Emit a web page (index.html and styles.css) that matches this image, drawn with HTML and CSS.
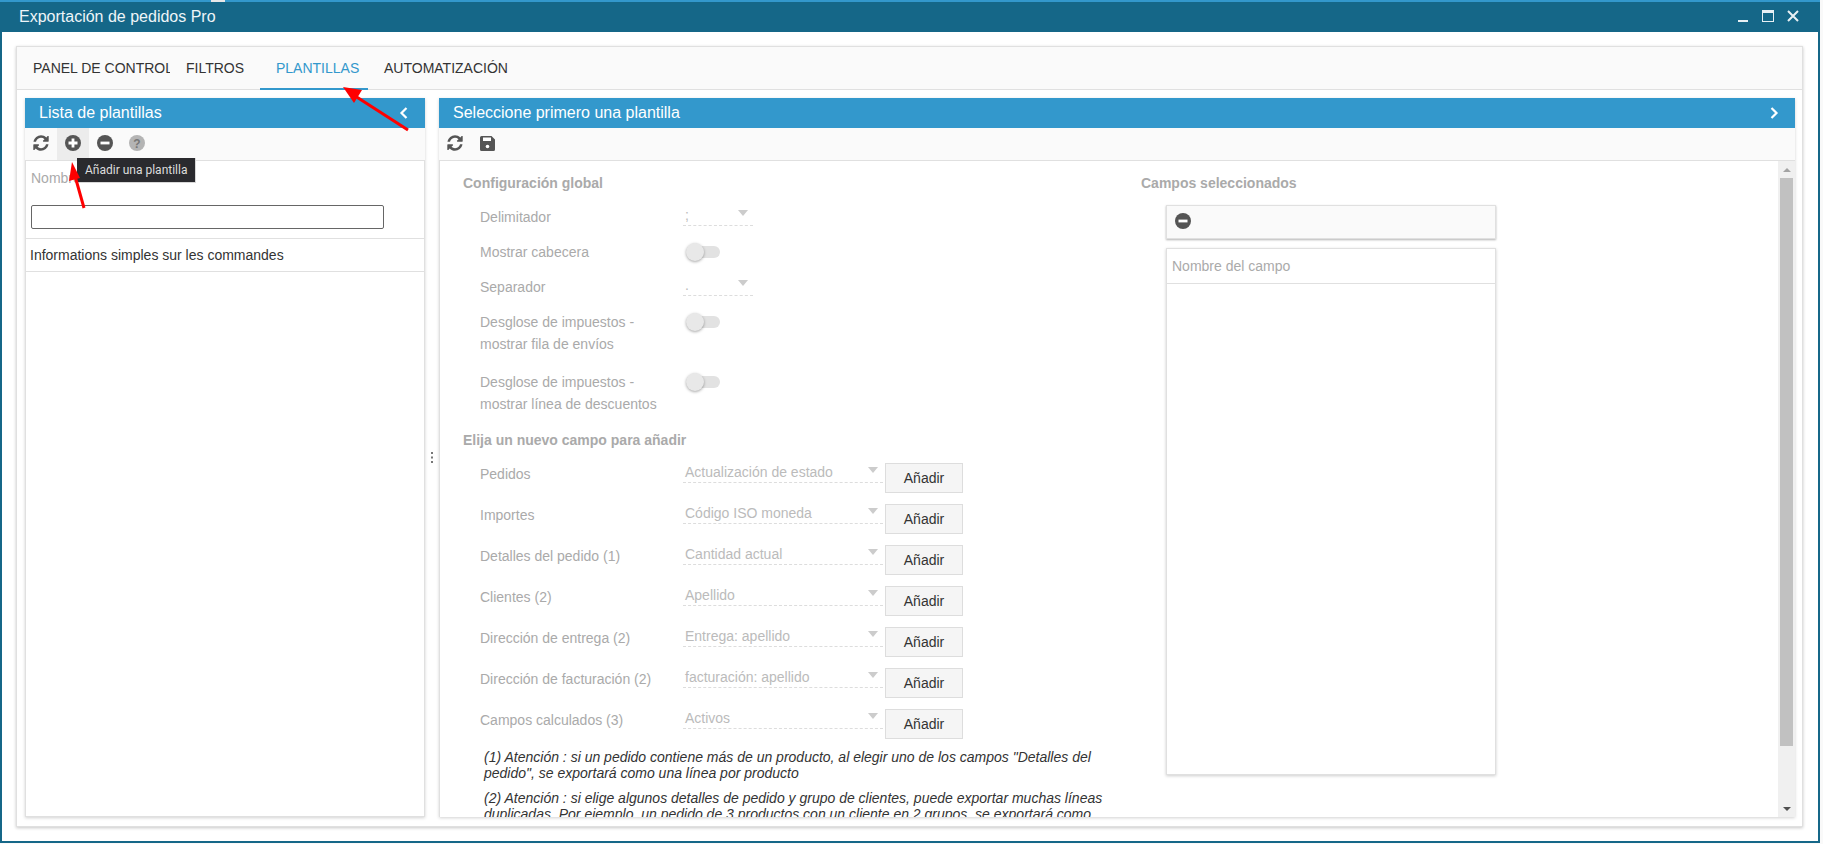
FILE: index.html
```html
<!DOCTYPE html>
<html lang="es">
<head>
<meta charset="utf-8">
<title>Exportación de pedidos Pro</title>
<link rel="stylesheet" href="styles.css">
</head>
<body>
<div class="window">
  <span class="top-tick"></span>
  <header class="titlebar">
    <span class="title">Exportación de pedidos Pro</span>
    <div class="win-controls">
      <svg class="win-icon" width="12" height="14" viewBox="0 0 12 14"><rect x="1" y="11" width="10" height="2" fill="#e8f0f4"/></svg>
      <svg class="win-icon" width="12" height="14" viewBox="0 0 12 14"><path d="M0 1h12v12H0z M1 4v8h10V4z" fill="#e8f0f4" fill-rule="evenodd"/></svg>
      <svg class="win-icon" width="12" height="14" viewBox="0 0 12 14"><path d="M1 2l10 10M11 2L1 12" stroke="#e8f0f4" stroke-width="2" fill="none"/></svg>
    </div>
  </header>
  <main class="content">
    <section class="card">
      <nav class="tabs">
        <a class="tab tab-clip">PANEL DE CONTROL</a>
        <a class="tab tab-filters">FILTROS</a>
        <a class="tab active">PLANTILLAS</a>
        <a class="tab">AUTOMATIZACIÓN</a>
      </nav>
      <div class="split">
        <aside class="panel panel-left">
          <div class="panel-head">
            <span>Lista de plantillas</span>
            <svg width="10" height="14" viewBox="0 0 10 14"><path d="M7.5 2L2.5 7l5 5" stroke="#fff" stroke-width="2.2" fill="none"/></svg>
          </div>
          <div class="toolbar">
            <button class="tool"><svg width="18" height="18" viewBox="0 0 1792 1792"><path class="ic" d="M1639 1056q0 5-1 7-64 268-268 434.5t-478 166.5q-146 0-282.5-55t-243.5-157l-129 129q-19 19-45 19t-45-19-19-45v-448q0-26 19-45t45-19h448q26 0 45 19t19 45-19 45l-137 137q71 66 161 102t187 36q134 0 250-65t186-179q11-17 53-117 8-23 30-23h192q13 0 22.5 9.5t9.5 22.5zm25-800v448q0 26-19 45t-45 19h-448q-26 0-45-19t-19-45 19-45l138-138q-148-137-349-137-134 0-250 65t-186 179q-11 17-53 117-8 23-30 23h-199q-13 0-22.5-9.5t-9.5-22.5v-7q65-268 270-434.5t480-166.5q146 0 284 55.5t245 156.5l130-129q19-19 45-19t45 19 19 45z"/></svg></button>
            <button class="tool tool-hover"><svg width="16" height="16" viewBox="0 0 16 16"><circle class="ic" cx="8" cy="8" r="8"/><path d="M3.5 6.6h3.1V3.5h2.8v3.1h3.1v2.8H9.4v3.1H6.6V9.4H3.5z" fill="#fff"/></svg></button>
            <button class="tool"><svg width="16" height="16" viewBox="0 0 16 16"><circle class="ic" cx="8" cy="8" r="8"/><rect x="3.5" y="6.6" width="9" height="2.8" fill="#fff"/></svg></button>
            <button class="tool"><svg width="16" height="16" viewBox="0 0 16 16"><circle cx="8" cy="8" r="8" fill="#b4b4b4"/><text class="q" x="8" y="12.5" text-anchor="middle">?</text></svg></button>
          </div>
          <div class="list-body">
            <div class="list-label">Nombre</div>
            <div class="filter-row"><input class="filter" type="text"></div>
            <div class="list-row">Informations simples sur les commandes</div>
          </div>
          <div class="tooltip">Añadir una plantilla</div>
        </aside>
        <div class="splitter">
          <svg width="2" height="11" viewBox="0 0 2 11"><path d="M0 0h2v2H0zM0 4.500h2v2H0zM0 9h2v2H0z" fill="#777"/></svg>
        </div>
        <section class="panel panel-right">
          <div class="panel-head">
            <span>Seleccione primero una plantilla</span>
            <svg width="10" height="14" viewBox="0 0 10 14"><path d="M2.500 2l5 5-5 5" stroke="#fff" stroke-width="2.200" fill="none"/></svg>
          </div>
          <div class="toolbar">
            <button class="tool"><svg width="18" height="18" viewBox="0 0 1792 1792"><path class="ic" d="M1639 1056q0 5-1 7-64 268-268 434.5t-478 166.5q-146 0-282.5-55t-243.5-157l-129 129q-19 19-45 19t-45-19-19-45v-448q0-26 19-45t45-19h448q26 0 45 19t19 45-19 45l-137 137q71 66 161 102t187 36q134 0 250-65t186-179q11-17 53-117 8-23 30-23h192q13 0 22.5 9.5t9.5 22.5zm25-800v448q0 26-19 45t-45 19h-448q-26 0-45-19t-19-45 19-45l138-138q-148-137-349-137-134 0-250 65t-186 179q-11 17-53 117-8 23-30 23h-199q-13 0-22.5-9.5t-9.5-22.5v-7q65-268 270-434.5t480-166.5q146 0 284 55.500t245 156.500l130-129q19-19 45-19t45 19 19 45z"/></svg></button>
            <button class="tool"><svg width="15" height="15" viewBox="0 0 15 15"><path class="ic" d="M1.500 0H11.500L15 3.500V13.500A1.500 1.500 0 0 1 13.500 15H1.500A1.500 1.500 0 0 1 0 13.500V1.500A1.500 1.500 0 0 1 1.500 0z"/><rect x="3" y="1.500" width="8" height="3.500" fill="#fff"/><circle cx="7.500" cy="10.500" r="1.800" fill="#fff"/></svg></button>
          </div>
          <div class="form-area">
            <div class="form-main">
              <div class="form-col">
                <h3 class="section">Configuración global</h3>
                <div class="row"><label class="lab">Delimitador</label><div class="select short"><span>;</span><i class="arrow"></i></div></div>
                <div class="row"><label class="lab">Mostrar cabecera</label><span class="toggle"><i></i></span></div>
                <div class="row"><label class="lab">Separador</label><div class="select short"><span>.</span><i class="arrow"></i></div></div>
                <div class="row row-tall"><label class="lab">Desglose de impuestos -<br>mostrar fila de envíos</label><span class="toggle"><i></i></span></div>
                <div class="row row-tall"><label class="lab">Desglose de impuestos -<br>mostrar línea de descuentos</label><span class="toggle"><i></i></span></div>
                <h3 class="section">Elija un nuevo campo para añadir</h3>
                <div class="row row-add"><label class="lab">Pedidos</label><div class="select"><span>Actualización de estado</span><i class="arrow"></i></div><button class="add">Añadir</button></div>
                <div class="row row-add"><label class="lab">Importes</label><div class="select"><span>Código ISO moneda</span><i class="arrow"></i></div><button class="add">Añadir</button></div>
                <div class="row row-add"><label class="lab">Detalles del pedido (1)</label><div class="select"><span>Cantidad actual</span><i class="arrow"></i></div><button class="add">Añadir</button></div>
                <div class="row row-add"><label class="lab">Clientes (2)</label><div class="select"><span>Apellido</span><i class="arrow"></i></div><button class="add">Añadir</button></div>
                <div class="row row-add"><label class="lab">Dirección de entrega (2)</label><div class="select"><span>Entrega: apellido</span><i class="arrow"></i></div><button class="add">Añadir</button></div>
                <div class="row row-add"><label class="lab">Dirección de facturación (2)</label><div class="select"><span>facturación: apellido</span><i class="arrow"></i></div><button class="add">Añadir</button></div>
                <div class="row row-add"><label class="lab">Campos calculados (3)</label><div class="select"><span>Activos</span><i class="arrow"></i></div><button class="add">Añadir</button></div>
                <p class="note">(1) Atención : si un pedido contiene más de un producto, al elegir uno de los campos "Detalles del pedido", se exportará como una línea por producto</p>
                <p class="note">(2) Atención : si elige algunos detalles de pedido y grupo de clientes, puede exportar muchas líneas duplicadas. Por ejemplo, un pedido de 3 productos con un cliente en 2 grupos, se exportará como</p>
              </div>
              <div class="selected-col">
                <h3 class="section">Campos seleccionados</h3>
                <div class="selected-bar"><svg width="16" height="16" viewBox="0 0 16 16"><circle class="ic" cx="8" cy="8" r="8"/><rect x="3.500" y="6.600" width="9" height="2.800" fill="#fff"/></svg></div>
                <div class="selected-grid"><div class="selected-head">Nombre del campo</div></div>
              </div>
            </div>
            <div class="scrollbar">
              <span class="sb-btn"><i class="sb-up"></i></span>
              <div class="sb-track"><div class="sb-thumb"></div></div>
              <span class="sb-btn"><i class="sb-down"></i></span>
            </div>
          </div>
        </section>
      </div>
    </section>
  </main>
</div>
<svg class="annotations" width="1823" height="844" viewBox="0 0 1823 844">
  <path d="M408 130L352 94" stroke="#f00" stroke-width="3" fill="none"/>
  <path d="M343 87L362 90L354 103z" fill="#f00"/>
  <path d="M84 208L75 176" stroke="#f00" stroke-width="3" fill="none"/>
  <path d="M72 162L80 178L69 181z" fill="#f00"/>
</svg>
</body>
</html>
```
FILE: styles.css
```css
* { box-sizing: border-box; }
html, body { margin: 0; height: 844px; overflow: hidden; background: #f9f9f9; }
body { font-family: "Liberation Sans", Arial, sans-serif; font-size: 14px; color: #333; }

.window {
  width: 1820px; height: 843px;
  display: flex; flex-direction: column;
  background: #fff;
  border: 2px solid #156788; border-top: 0; border-bottom-width: 2px;
  position: relative;
}
.top-tick { position: absolute; left: 209px; top: 0; width: 14px; height: 2px; background: #e8e8e8; z-index: 1; }
.titlebar {
  height: 32px; flex: none;
  background: #156788; border-top: 2px solid #3398cc;
  display: flex; align-items: center; justify-content: space-between;
  margin: 0 -2px;
  padding-left: 19px; padding-right: 21px;
  color: #eef5f8; font-size: 16px;
}
.win-controls { display: flex; gap: 13px; position: relative; top: -1px; }
.win-icon { display: block; }

.content { flex: 1; min-height: 0; padding: 14px 15px 14px 14px; display: flex; }
.card {
  flex: 1; min-width: 0;
  display: flex; flex-direction: column;
  background: #fff;
  border: 1px solid #e0e0e0;
  box-shadow: 0 1px 3px rgba(0,0,0,.22);
}
.tabs { height: 43px; flex: none; display: flex; background: #fafafa; border-bottom: 1px solid #e0e0e0; }
.tab { display: block; padding: 0 16px; line-height: 42px; height: 43px; white-space: nowrap; color: #333; }
.tab-clip { width: 153px; overflow: hidden; padding-right: 0; }
.tab-filters { width: 90px; }
.tab.active { width: 108px; color: #3398cc; border-bottom: 2px solid #3398cc; padding: 0 0 0 16px; }

.split { flex: 1; min-height: 0; display: flex; padding: 8px 7px 9px 8px; }
.panel { display: flex; flex-direction: column; min-height: 0; position: relative; box-shadow: 0 1px 3px rgba(0,0,0,.18); }
.panel-left { width: 400px; flex: none; }
.panel-right { flex: 1; min-width: 0; }
.splitter { width: 14px; flex: none; display: flex; align-items: center; justify-content: center; }
.splitter svg { display: block; }

.panel-head {
  height: 30px; flex: none; background: #3398cc; color: #fff; font-size: 16px;
  display: flex; align-items: center; justify-content: space-between;
  padding: 0 16px 0 14px;
}
.toolbar { height: 33px; flex: none; display: flex; background: #fafafa; border-bottom: 1px solid #e0e0e0; }
.tool { width: 32px; height: 32px; padding: 0 0 2px; border: 0; background: transparent; display: flex; align-items: center; justify-content: center; }
.tool-hover { background: #ececec; }
.ic { fill: #555; }
.q { font: bold 12px "Liberation Sans", sans-serif; fill: #777; }

.list-body { flex: 1; border: 1px solid #e0e0e0; border-top: 0; background: #fff; }
.list-label { height: 44px; padding: 6px 0 0 5px; line-height: 22px; color: #aaa; }
.filter-row { height: 34px; padding-left: 5px; border-bottom: 1px solid #e0e0e0; }
.filter { display: block; width: 353px; height: 24px; padding: 0 4px; border: 1px solid #666; border-radius: 2px; background: #fff; }
.list-row { height: 33px; padding-left: 4px; line-height: 32px; border-bottom: 1px solid #e0e0e0; color: #333; }
.tooltip {
  position: absolute; left: 52px; top: 60px; width: 119px; height: 25px;
  background: #2a2a2e; border: 1px solid #d8d8d8; border-width: 0 1px 1px 0;
  color: #ddd; font-family: Roboto, sans-serif; font-size: 12px; line-height: 25px; padding-left: 8px; white-space: nowrap;
}

.form-area { flex: 1; min-height: 0; display: flex; background: #fff; border-left: 1px solid #e0e0e0; }
.form-main { flex: 1; min-width: 0; display: flex; align-items: flex-start; overflow: hidden; padding: 11px 0 0 23px; }
.form-col { width: 678px; flex: none; }
.section { margin: 0 0 10px; font-size: 14px; font-weight: 700; line-height: 22px; color: #aaa; }
.row { display: flex; align-items: flex-start; height: 35px; padding-left: 17px; }
.row-tall { height: 60px; }
.row-add { height: 41px; }
.lab { width: 203px; flex: none; padding-top: 2px; line-height: 22px; color: #aaa; }
.select {
  width: 200px; height: 22px; flex: none;
  display: flex; justify-content: space-between;
  padding: 0 5px 0 2px;
  line-height: 22px; color: #bbb; font-size: 14px;
  border-bottom: 1px dashed #ddd;
}
.select.short { width: 70px; }
.arrow { width: 0; height: 0; margin-top: 6px; border: 5px solid transparent; border-top: 6px solid #ccc; border-bottom: 0; }
.add {
  width: 78px; height: 30px; margin: 2px 0 0 2px; padding: 0;
  font: 14px "Liberation Sans", Arial, sans-serif; color: #333;
  background: #f5f5f5; border: 1px solid #ddd;
}
.toggle { position: relative; display: block; width: 34px; height: 12px; margin: 7px 0 0 3px; border-radius: 6px; background: #e2e2e2; }
.toggle i { position: absolute; left: 0; top: -3px; width: 18px; height: 18px; border-radius: 50%; background: #e8e8e8; box-shadow: 0 1px 3px rgba(0,0,0,.35); }
.note { margin: 0 0 9px; padding-left: 21px; width: 648px; font-style: italic; line-height: 16px; color: #333; }
.row-add + .note { margin-top: 1px; }

.selected-col { width: 360px; flex: none; }
.selected-col .section { margin-bottom: 11px; }
.selected-bar {
  margin-left: 25px; width: 330px; height: 34px;
  display: flex; align-items: center; padding: 0 0 2px 8px;
  background: #fafafa; border: 1px solid #e0e0e0;
  box-shadow: 0 1px 2px rgba(0,0,0,.3);
}
.selected-grid {
  margin: 9px 0 0 25px; width: 330px; height: 527px;
  background: #fff; border: 1px solid #e0e0e0;
  box-shadow: 0 1px 3px rgba(0,0,0,.2);
}
.selected-head { height: 35px; padding-left: 5px; line-height: 34px; color: #aaa; border-bottom: 1px solid #e0e0e0; }

.scrollbar { width: 17px; flex: none; display: flex; flex-direction: column; background: #f0f0f0; }
.sb-btn { height: 17px; flex: none; display: flex; align-items: center; justify-content: center; }
.sb-up { width: 0; height: 0; border: 4px solid transparent; border-bottom: 4px solid #a3a3a3; border-top: 0; }
.sb-down { width: 0; height: 0; border: 4px solid transparent; border-top: 4px solid #505050; border-bottom: 0; }
.sb-track { flex: 1; padding: 0 2px; }
.sb-thumb { height: 568px; background: #c1c1c1; }

.annotations { position: absolute; left: 0; top: 0; pointer-events: none; }
```
